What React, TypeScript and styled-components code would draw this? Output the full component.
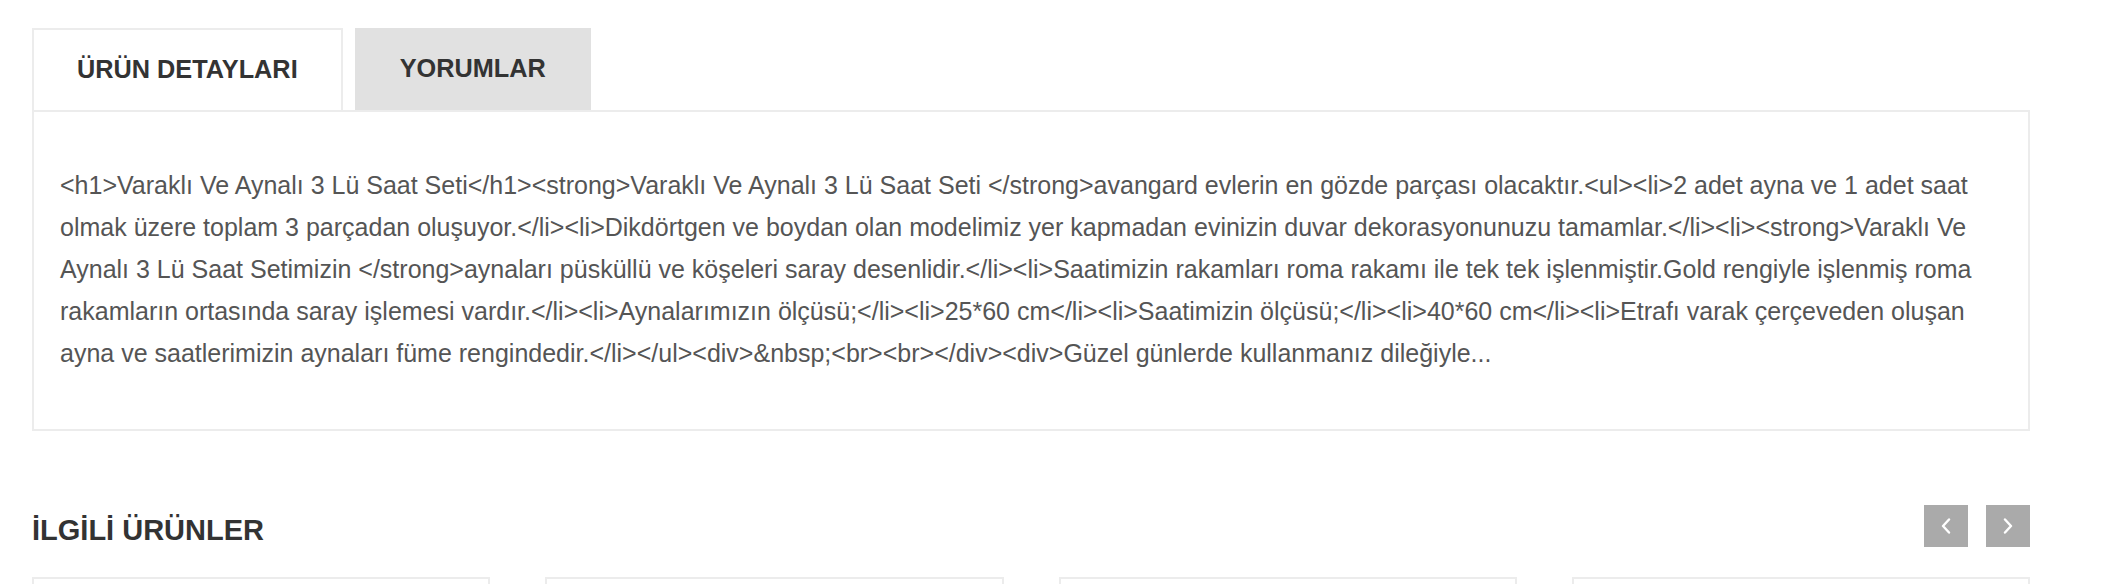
import React from "react";
import styled, { createGlobalStyle } from "styled-components";

const Global = createGlobalStyle`
  html, body { margin: 0; padding: 0; background: #fff; overflow: hidden; }
  body { font-family: "Liberation Sans", Arial, sans-serif; }
  * { box-sizing: border-box; }
`;

const Page = styled.div`
  width: 2102px;
  padding: 28px 72px 0 32px;
`;

const TabBar = styled.div`
  display: flex;
  gap: 12px;
  align-items: stretch;
  height: 82px;
`;

const Tab = styled.div<{ $active?: boolean }>`
  display: flex;
  align-items: center;
  justify-content: center;
  padding: 0 ${(p) => (p.$active ? "43px" : "45px")};
  font-size: 25.3px;
  line-height: 1;
  font-weight: 700;
  color: #333;
  background: ${(p) => (p.$active ? "#fff" : "#e1e1e1")};
  border: ${(p) => (p.$active ? "2px solid #ececec" : "none")};
  border-bottom: none;
  cursor: pointer;
`;

const Panel = styled.div`
  border: 2px solid #ececec;
  padding: 52px 26px 55px;
  font-size: 25px;
  line-height: 42px;
  color: #555;
`;

const Description = styled.p`
  margin: 0;
`;

const RelatedHeader = styled.div`
  display: flex;
  justify-content: space-between;
  align-items: flex-start;
  margin-top: 74px;
`;

const Heading = styled.h2`
  margin: 4px 0 0;
  font-size: 29px;
  line-height: 42px;
  font-weight: 700;
  color: #333;
`;

const Arrows = styled.div`
  display: flex;
  gap: 18px;
`;

const ArrowButton = styled.button`
  width: 44px;
  height: 42px;
  border: none;
  padding: 0;
  background: #aaa;
  display: flex;
  align-items: center;
  justify-content: center;
  cursor: pointer;
`;

const Cards = styled.div`
  display: grid;
  grid-template-columns: repeat(4, 1fr);
  gap: 55px;
  margin-top: 26px;
`;

const Card = styled.div`
  height: 300px;
  border: 2px solid #ececec;
  background: #fff;
`;

const Chevron = ({ dir }: { dir: "left" | "right" }) => (
  <svg width="12" height="16" viewBox="0 0 12 16" fill="none">
    <polyline
      points={dir === "left" ? "9,1.5 3,8 9,14.5" : "3,1.5 9,8 3,14.5"}
      stroke="#fff"
      strokeWidth="2.4"
      strokeLinecap="round"
      strokeLinejoin="round"
    />
  </svg>
);

const text =
  "<h1>Varaklı Ve Aynalı 3 Lü Saat Seti</h1><strong>Varaklı Ve Aynalı 3 Lü Saat Seti </strong>avangard evlerin en gözde parçası olacaktır.<ul><li>2 adet ayna ve 1 adet saat olmak üzere toplam 3 parçadan oluşuyor.</li><li>Dikdörtgen ve boydan olan modelimiz yer kapmadan evinizin duvar dekorasyonunuzu tamamlar.</li><li><strong>Varaklı Ve Aynalı 3 Lü Saat Setimizin </strong>aynaları püsküllü ve köşeleri saray desenlidir.</li><li>Saatimizin rakamları roma rakamı ile tek tek işlenmiştir.Gold rengiyle işlenmiş roma rakamların ortasında saray işlemesi vardır.</li><li>Aynalarımızın ölçüsü;</li><li>25*60 cm</li><li>Saatimizin ölçüsü;</li><li>40*60 cm</li><li>Etrafı varak çerçeveden oluşan ayna ve saatlerimizin aynaları füme rengindedir.</li></ul><div>&nbsp;<br><br></div><div>Güzel günlerde kullanmanız dileğiyle...";

export default function App() {
  return (
    <>
      <Global />
      <Page>
        <TabBar>
          <Tab $active>ÜRÜN DETAYLARI</Tab>
          <Tab>YORUMLAR</Tab>
        </TabBar>
        <Panel>
          <Description>{text}</Description>
        </Panel>
        <RelatedHeader>
          <Heading>İLGİLİ ÜRÜNLER</Heading>
          <Arrows>
            <ArrowButton aria-label="Önceki">
              <Chevron dir="left" />
            </ArrowButton>
            <ArrowButton aria-label="Sonraki">
              <Chevron dir="right" />
            </ArrowButton>
          </Arrows>
        </RelatedHeader>
        <Cards>
          <Card />
          <Card />
          <Card />
          <Card />
        </Cards>
      </Page>
    </>
  );
}
